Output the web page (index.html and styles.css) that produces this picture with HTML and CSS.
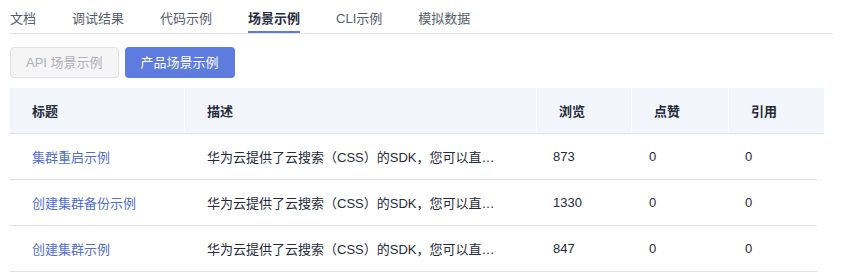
FILE: index.html
```html
<!DOCTYPE html>
<html lang="zh">
<head>
<meta charset="utf-8">
<link rel="stylesheet" href="styles.css">
</head>
<body>
<div class="page">
  <div class="tabs">
    <div class="tab">文档</div>
    <div class="tab">调试结果</div>
    <div class="tab">代码示例</div>
    <div class="tab active">场景示例</div>
    <div class="tab">CLI示例</div>
    <div class="tab">模拟数据</div>
  </div>
  <div class="btns">
    <button class="btn btn-off">API 场景示例</button>
    <button class="btn btn-on">产品场景示例</button>
  </div>
  <div class="thead">
    <div class="th">标题</div>
    <div class="th">描述</div>
    <div class="th">浏览</div>
    <div class="th">点赞</div>
    <div class="th">引用</div>
  </div>
  <div class="tbody">
    <div class="tr">
      <div class="td"><a class="link">集群重启示例</a></div>
      <div class="td"><span class="desc">华为云提供了云搜索（CSS）的SDK，您可以直接集成SDK来调用API</span></div>
      <div class="td">873</div>
      <div class="td">0</div>
      <div class="td">0</div>
    </div>
    <div class="tr">
      <div class="td"><a class="link">创建集群备份示例</a></div>
      <div class="td"><span class="desc">华为云提供了云搜索（CSS）的SDK，您可以直接集成SDK来调用API</span></div>
      <div class="td">1330</div>
      <div class="td">0</div>
      <div class="td">0</div>
    </div>
    <div class="tr">
      <div class="td"><a class="link">创建集群示例</a></div>
      <div class="td"><span class="desc">华为云提供了云搜索（CSS）的SDK，您可以直接集成SDK来调用API</span></div>
      <div class="td">847</div>
      <div class="td">0</div>
      <div class="td">0</div>
    </div>
  </div>
</div>
</body>
</html>
```
FILE: styles.css
```css
* { box-sizing: border-box; }
body {
  margin: 0;
  background: #fff;
  font-family: "Liberation Sans", Arial, "Noto Sans CJK SC", sans-serif;
  font-size: 13px;
  color: #252b3a;
}
.page { padding: 0 10px; }
.tabs {
  display: flex;
  gap: 36px;
  width: 823px;
  border-bottom: 1px solid #dfe1e6;
  height: 34px;
}
.tab {
  padding-top: 9px;
  line-height: 20px;
  height: 33px;
  color: #575d6c;
  border-bottom: 2px solid transparent;
}
.tab.active {
  color: #252b3a;
  font-weight: bold;
  border-bottom-color: #5e7ce0;
}
.btns {
  display: flex;
  gap: 6px;
  margin-top: 13px;
}
.btn {
  height: 31px;
  padding: 0 16px;
  font: inherit;
  font-size: 13px;
  border-radius: 4px;
  line-height: 29px;
}
.btn-off {
  padding: 0 15px;
  background: #f5f5f6;
  border: 1px solid #dfe1e6;
  color: #adb0b8;
}
.btn-on {
  background: #5e7ce0;
  border: none;
  line-height: 31px;
  color: #fff;
}
.thead {
  margin-top: 10px;
  display: grid;
  grid-template-columns: 174px 352px 95px 97px 96px;
  width: 814px;
  background: #f2f5fc;
  border-bottom: 1px solid #dfe1e6;
  height: 46px;
}
.th {
  display: flex;
  align-items: center;
  padding-left: 22px;
  font-weight: bold;
}
.th + .th {
  border-left: 1px solid #fff;
}
.tbody { width: 807px; }
.tr {
  display: grid;
  grid-template-columns: 174px 346px 96px 96px 95px;
  height: 46px;
  border-bottom: 1px solid #dfe1e6;
}
.td {
  display: flex;
  align-items: center;
  padding-left: 22px;
  min-width: 0;
  overflow: hidden;
}
.td + .td { padding-left: 23px; }
.link { color: #526ecc; cursor: pointer; }
.desc {
  display: block;
  width: 290px;
  white-space: nowrap;
  overflow: hidden;
  text-overflow: ellipsis;
}
```
